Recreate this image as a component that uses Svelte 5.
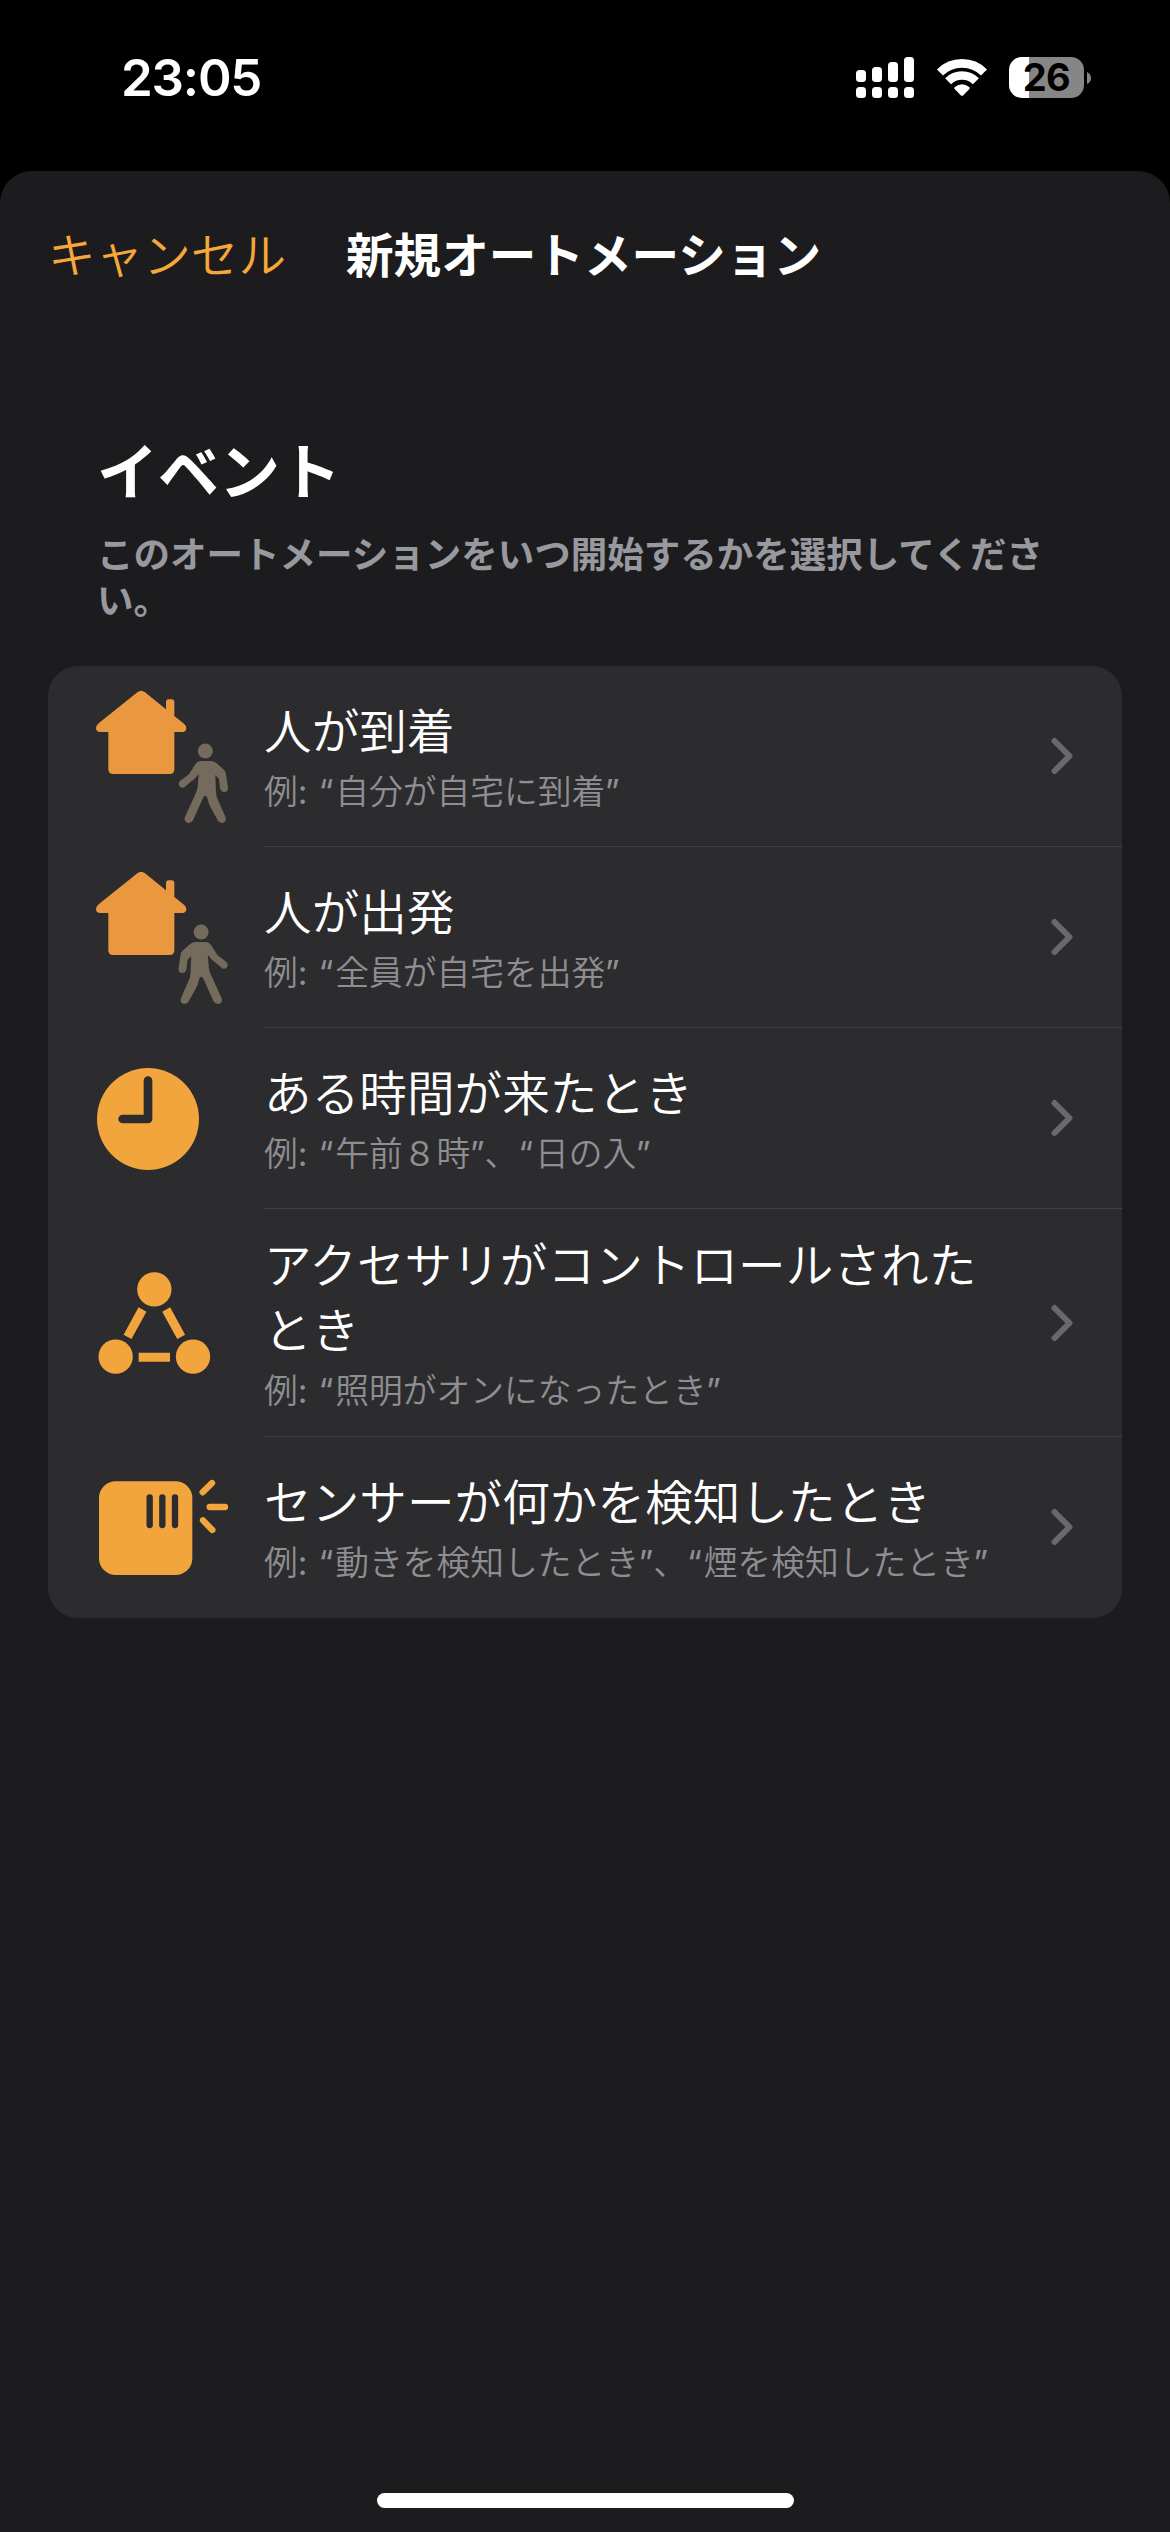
<script>
  const rows = [
    { icon: 'arrive', title: '人が到着', sub: '例: “自分が自宅に到着”' },
    { icon: 'leave', title: '人が出発', sub: '例: “全員が自宅を出発”' },
    { icon: 'clock', title: 'ある時間が来たとき', sub: '例: “午前８時”、“日の入”' },
    { icon: 'nodes', title: 'アクセサリがコントロールされたとき', sub: '例: “照明がオンになったとき”' },
    { icon: 'sensor', title: 'センサーが何かを検知したとき', sub: '例: “動きを検知したとき”、“煙を検知したとき”' }
  ];
</script>

{#snippet house()}
  <path
    class="house"
    d="M292 97Q303 87 315 97L378 148V126Q378 118 386 118H395Q403 118 403 126V168L432 191Q439 197 439 205Q438 216 427 216H403V328Q403 342 389 342H219Q205 342 205 328V216H181Q168 216 168 205Q168 197 176 190Z"
  />
{/snippet}

{#snippet walker()}
  <circle cx="496" cy="273" r="22.5" />
  <path
    d="M482 303H512Q522 303 529 309L550 328Q557 334 558 343L564 383Q564 396 553 396Q542 396 540 385L537 357L526 345L528 398Q529 412 535 422L556 470Q562 484 549 489Q539 490 534 482L511 440Q505 430 503 418Q500 407 496 407Q492 407 488 416L459 481Q453 491 442 489Q430 484 435 471L469 396Q472 388 473 380L476 342L463 357Q460 360 455 363L433 382Q422 387 417 376Q414 368 421 362L447 343L465 314Q472 303 482 303Z"
  />
{/snippet}

<div class="screen">
  <header class="status">
    <span class="time">23:05</span>
    <div class="indicators">
      <svg class="signal" viewBox="0 0 58 41">
        <rect x="0" y="13" width="10" height="12" rx="3.5" />
        <rect x="16" y="10" width="10" height="15" rx="3.5" />
        <rect x="32" y="5" width="10" height="20" rx="3.5" />
        <rect x="48" y="0" width="10" height="25" rx="3.5" />
        <rect x="0" y="30" width="10" height="11" rx="3.5" />
        <rect x="16" y="30" width="10" height="11" rx="3.5" />
        <rect x="32" y="30" width="10" height="11" rx="3.5" />
        <rect x="48" y="30" width="10" height="11" rx="3.5" />
      </svg>
      <svg class="wifi" viewBox="0 0 52 41">
        <path class="band" d="M4 15.5A31.2 31.2 0 0 1 48 15.5" />
        <path class="band" d="M12.1 24.3A19.7 19.7 0 0 1 39.9 24.3" />
        <path d="M18.6 32Q17.8 31 18.8 30Q26 24.6 33.2 30Q34.2 31 33.4 32L27 38.6Q26 39.5 25 38.6Z" />
      </svg>
      <div class="battery">
        <div class="cell"><span>26</span></div>
        <svg class="nub" viewBox="0 0 4 12"><path d="M0 0Q4 2 4 6Q4 10 0 12Z" /></svg>
      </div>
    </div>
  </header>

  <main class="sheet">
    <nav>
      <span class="cancel">キャンセル</span>
      <span class="heading">新規オートメーション</span>
    </nav>
    <section class="intro">
      <h1>イベント</h1>
      <p>このオートメーションをいつ開始するかを選択してください。</p>
    </section>
    <ul>
      {#each rows as row}
        <li class:tall={row.icon === 'nodes'}>
          <div class="icon">
            {#if row.icon === 'arrive'}
              <svg viewBox="24 18 648 543">
                {@render house()}
                <g class="person">{@render walker()}</g>
              </svg>
            {:else if row.icon === 'leave'}
              <svg viewBox="24 18 648 543">
                {@render house()}
                <g class="person" transform="translate(979.5 0) scale(-1 1)">{@render walker()}</g>
              </svg>
            {:else if row.icon === 'clock'}
              <svg viewBox="24 -6 648 543">
                <circle cx="324" cy="267" r="153" />
                <path class="hands" d="M324 152V267H248" />
              </svg>
            {:else if row.icon === 'nodes'}
              <svg viewBox="24 537 648 684">
                <circle cx="343" cy="778" r="51.5" />
                <circle cx="227" cy="980" r="51.5" />
                <circle cx="459" cy="980" r="51.5" />
                <path class="link" d="M307.500 838.500L262.500 920.500M378.500 838.500L423.500 920.500M296 981.500H390" />
              </svg>
            {:else}
              <svg viewBox="24 111 648 543">
                <rect x="177" y="244" width="280" height="281" rx="50" />
                <path class="slots" d="M329 292V375M367 292V375M405 292V375" />
                <path class="rays" d="M488 277L516 249M509 321H555M489 361L517 390" />
              </svg>
            {/if}
          </div>
          <div class="body">
            <div class="text">
              <div class="title">{row.title}</div>
              <div class="sub">
                {#each row.sub.split(/([:“”８])/) as part}{#if /^[:“”８]$/.test(part)}<span class="mark" class:open={part === '“'} class:close={part === '”'}>{part}</span>{:else}{part}{/if}{/each}
              </div>
            </div>
            <svg class="chevron" viewBox="0 0 22 38"><path d="M3.500 4L18.500 19L3.500 34" /></svg>
          </div>
        </li>
      {/each}
    </ul>
    <div class="home"></div>
  </main>
</div>

<style>
  :global(body) {
    margin: 0;
    background: #000;
  }
  .screen {
    width: 1170px;
    height: 2532px;
    display: flex;
    flex-direction: column;
    background: #000;
    color: #fff;
    font-family: Inter, 'Noto Sans CJK JP', sans-serif;
    overflow: hidden;
  }
  svg {
    display: block;
  }
  .status {
    height: 171px;
    flex: none;
    box-sizing: border-box;
    padding: 57px 79px 0 121px;
    display: flex;
    justify-content: space-between;
    align-items: flex-start;
  }
  .time {
    font-size: 51px;
    line-height: 42px;
    font-weight: 600;
    letter-spacing: -1.200px;
  }
  .indicators {
    display: flex;
  }
  .indicators svg {
    fill: #fff;
  }
  .signal {
    width: 58px;
    height: 41px;
    margin-right: 22px;
  }
  .wifi {
    width: 52px;
    height: 41px;
    margin-right: 21px;
  }
  .band {
    fill: none;
    stroke: #fff;
    stroke-width: 8.600;
  }
  .battery {
    display: flex;
    align-items: center;
    gap: 3px;
  }
  .cell {
    width: 75px;
    height: 41px;
    border-radius: 13px;
    background: linear-gradient(to right, #fff 20px, #868686 20px);
    color: #000;
    font-size: 38px;
    line-height: 41px;
    font-weight: 650;
    letter-spacing: -0.500px;
    text-align: center;
  }
  .indicators .nub {
    width: 4px;
    height: 12px;
    fill: #868686;
  }
  .sheet {
    flex: 1;
    display: flex;
    flex-direction: column;
    background: #1c1c1e;
    border-radius: 32px 32px 0 0;
  }
  nav {
    display: flex;
    gap: 60px;
    padding: 49px 48px 0;
    font-size: 47.600px;
    line-height: 72px;
  }
  .cancel {
    color: #f7a63a;
    font-weight: 350;
  }
  .heading {
    font-weight: 700;
  }
  .intro {
    padding: 0 97px;
    margin-top: 137px;
  }
  h1 {
    margin: 0;
    font-size: 61px;
    line-height: 88px;
    font-weight: 700;
  }
  p {
    margin: 15px 0 0;
    font-size: 36.500px;
    line-height: 46px;
    font-weight: 600;
    color: #98989f;
  }
  ul {
    list-style: none;
    margin: 42px 48px 0;
    padding: 0;
    background: #2c2c2e;
    border-radius: 30px;
  }
  li {
    display: flex;
    height: 181px;
  }
  li.tall {
    height: 228px;
  }
  .icon {
    width: 216px;
    flex: none;
  }
  .icon svg {
    width: 216px;
    height: 181px;
    fill: #f2a53c;
  }
  .tall .icon svg {
    height: 228px;
  }
  .icon .house {
    fill: #e9983f;
  }
  .person {
    fill: #756b5c;
  }
  .hands {
    fill: none;
    stroke: #2c2c2e;
    stroke-width: 26;
    stroke-linecap: round;
    stroke-linejoin: round;
  }
  .link {
    stroke: #f2a53c;
    stroke-width: 27;
  }
  .slots {
    stroke: #2c2c2e;
    stroke-width: 19;
    stroke-linecap: round;
  }
  .rays {
    stroke: #f2a53c;
    stroke-width: 19;
    stroke-linecap: round;
  }
  .body {
    flex: 1;
    box-sizing: border-box;
    display: flex;
    align-items: center;
    justify-content: space-between;
    padding-right: 49px;
    border-bottom: 1px solid #414144;
  }
  li:last-child .body {
    border-bottom-color: transparent;
  }
  .text {
    width: 730px;
    padding-top: 2px;
    font-weight: 350;
  }
  .title {
    font-size: 47.600px;
    line-height: 65px;
    letter-spacing: 0.050px;
  }
  .sub {
    margin-top: 4px;
    font-size: 33.750px;
    line-height: 48px;
    color: #8e8e93;
    white-space: nowrap;
    word-spacing: 1.500px;
  }
  .mark {
    font-weight: 400;
  }
  .open {
    margin-right: 1.800px;
  }
  .close {
    margin-left: -0.500px;
  }
  .chevron {
    width: 22px;
    height: 38px;
    fill: none;
    stroke: #69696c;
    stroke-width: 6;
    stroke-linecap: round;
    stroke-linejoin: round;
  }
  .home {
    width: 417px;
    height: 15px;
    margin: auto auto 24px;
    border-radius: 8px;
    background: #fff;
  }
</style>
